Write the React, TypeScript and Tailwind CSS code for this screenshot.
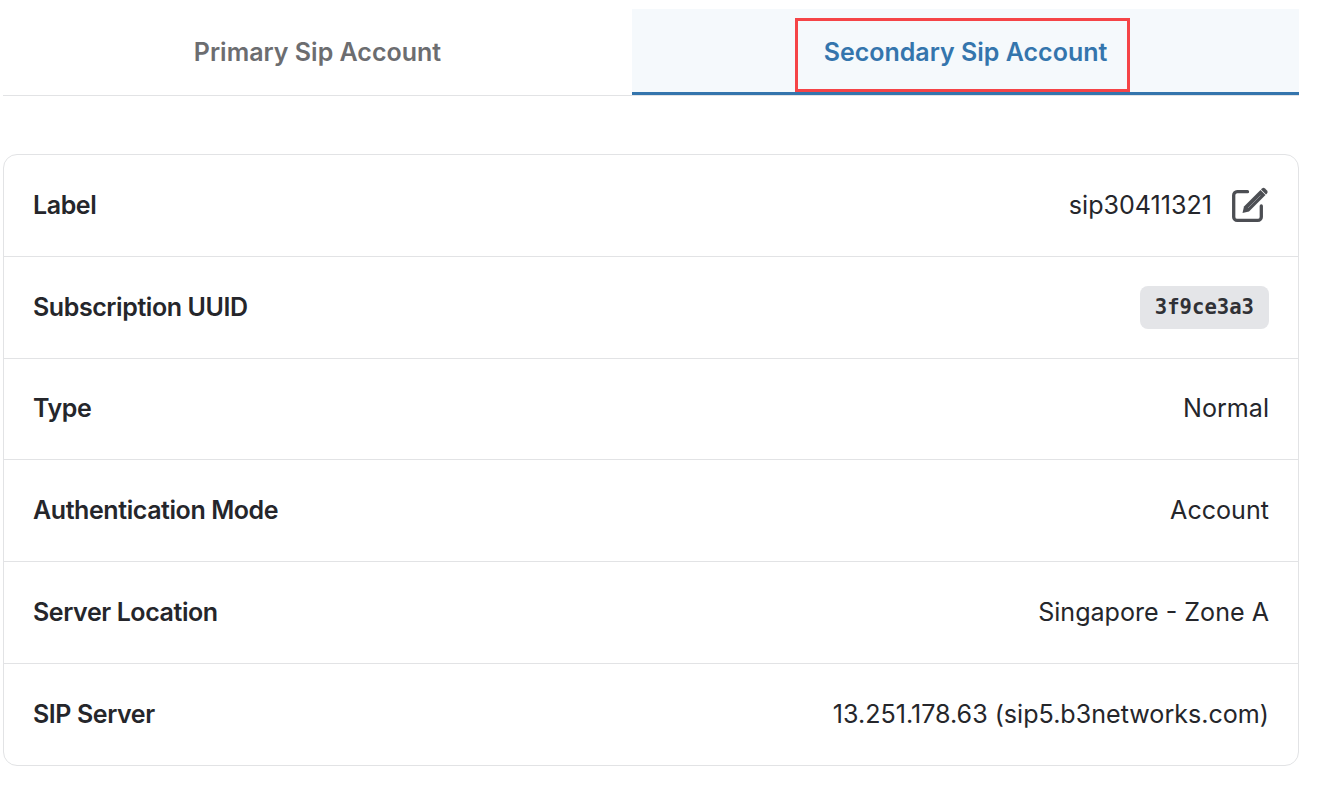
const ROWS = [
  { label: 'Type', value: 'Normal' },
  { label: 'Authentication Mode', value: 'Account' },
  { label: 'Server Location', value: 'Singapore - Zone A' },
  { label: 'SIP Server', value: '13.251.178.63 (sip5.b3networks.com)' },
]

const rowClass = 'flex items-center justify-between h-[101.7px] first:h-[101px] last:h-[102.5px] px-[29px] border-t border-[#e2e3e5] first:border-t-0'
const labelClass = 'font-semibold tracking-[-0.42px] text-[25px]'

function EditIcon() {
  return (
    <svg viewBox="0 0 38 38" className="w-[38px] h-[38px] text-[#4c4e53]" fill="none">
      <path d="M16.500 4.700H6.200a3.500 3.500 0 0 0-3.500 3.500v21.700a3.500 3.500 0 0 0 3.500 3.500h20.600a3.500 3.500 0 0 0 3.500-3.500V19" stroke="currentColor" strokeWidth="3.300" strokeLinecap="round" />
      <path d="M11.500 26l1.500-6.500L29.500 3l5 5L18 24.500z" fill="currentColor" />
      <path d="M31 1.500a2.200 2.200 0 0 1 3 0l2 2a2.200 2.200 0 0 1 0 3L35 7.500 30 2.500z" fill="currentColor" />
      <path d="M17 21L29.500 8.500" stroke="#85878c" strokeWidth="1" />
    </svg>
  )
}

export default function App() {
  return (
    <div className="w-[1320px] h-[788px] bg-white overflow-hidden font-['Inter',sans-serif] text-[25.1px] text-[#25262b]">
      <div className="ml-[3px] mr-[21px] pt-[9px]">
        {/* Tabs */}
        <div className="flex h-[87px] border-b border-[#e2e3e5] text-[25px]">
          <div className="w-[629px] flex items-center justify-center pt-[2px] font-semibold text-[#6c6d70]">
            Primary Sip Account
          </div>
          <div className="relative flex-1 flex items-center justify-center h-[86px] pt-[5px] bg-[#f5f9fc] border-b-[3px] border-[#3475ad] font-semibold text-[#3475ad]">
            Secondary Sip Account
            {/* annotation box */}
            <div className="absolute left-[163px] top-[9px] w-[335px] h-[74px] border-[3px] border-[#f54447]" />
          </div>
        </div>

        {/* Details card */}
        <div className="mt-[58px] border border-[#e2e3e5] rounded-[14px]">
          <div className={rowClass}>
            <span className={labelClass}>Label</span>
            <div className="flex items-center gap-[19px]">
              <span>sip30411321</span>
              <EditIcon />
            </div>
          </div>
          <div className={rowClass}>
            <span className={labelClass}>Subscription UUID</span>
            <span className="flex items-center h-[43px] px-[15px] rounded-[8px] bg-[#e4e5e8] font-['DejaVu_Sans_Mono',monospace] font-bold text-[20.6px] text-[#303136]">
              3f9ce3a3
            </span>
          </div>
          {ROWS.map(r => (
            <div key={r.label} className={rowClass}>
              <span className={labelClass}>{r.label}</span>
              <span>{r.value}</span>
            </div>
          ))}
        </div>
      </div>
    </div>
  )
}
